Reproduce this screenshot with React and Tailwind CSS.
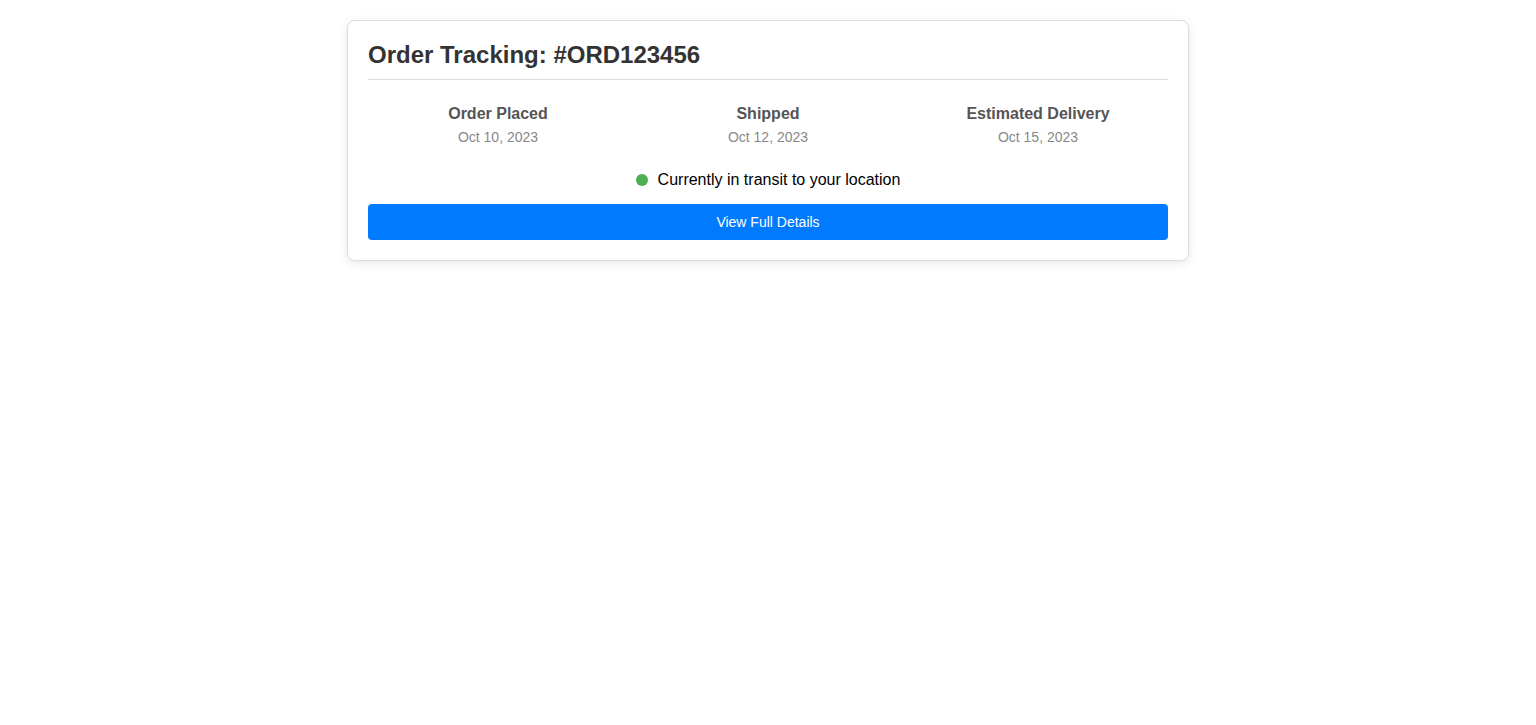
export default function App() {
  const steps = [
    { label: "Order Placed", date: "Oct 10, 2023" },
    { label: "Shipped", date: "Oct 12, 2023" },
    { label: "Estimated Delivery", date: "Oct 15, 2023" },
  ];
  return (
    <div className="min-h-screen bg-white pt-[20px]" style={{ fontFamily: '"Liberation Sans", Arial, sans-serif' }}>
      <div className="mx-auto w-[842px] rounded-lg border border-[#ddd] bg-white p-5 shadow-[0_2px_10px_rgba(0,0,0,0.1)]">
        <h2 className="border-b border-[#ddd] pb-[10px] text-[24px] font-bold leading-[28px] text-[#333]">
          Order Tracking: #ORD123456
        </h2>
        <div className="mt-[25px] grid grid-cols-3 gap-[10px]">
          {steps.map((s) => (
            <div key={s.label} className="text-center">
              <div className="text-[16px] font-bold leading-[18px] text-[#555]">{s.label}</div>
              <div className="mt-[6px] text-[14px] leading-[16px] text-[#888]">{s.date}</div>
            </div>
          ))}
        </div>
        <div className="mt-[26px] flex items-center justify-center text-[16px] leading-[18px] text-black">
          <span className="mr-[10px] inline-block h-[12px] w-[12px] rounded-full bg-[#4caf50]"></span>
          <span>Currently in transit to your location</span>
        </div>
        <button className="mt-[15px] flex h-[36px] w-full items-center justify-center rounded-[4px] bg-[#007bff] text-[14px] text-white">
          View Full Details
        </button>
      </div>
    </div>
  );
}
